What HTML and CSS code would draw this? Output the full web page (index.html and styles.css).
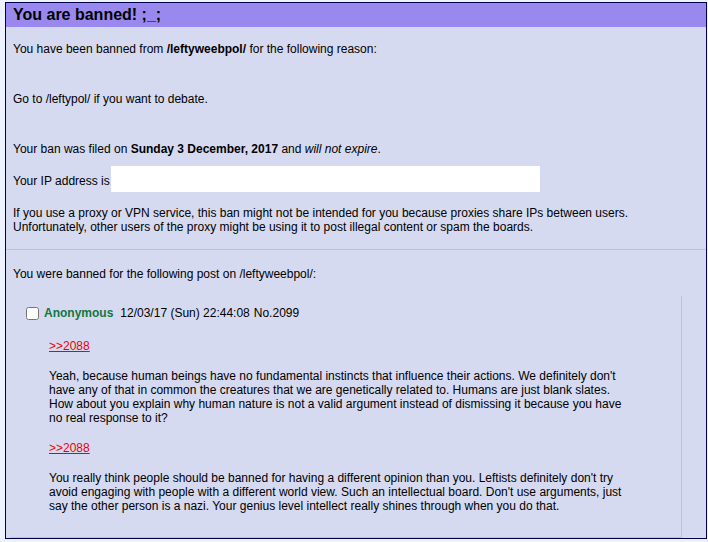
FILE: index.html
```html
<!DOCTYPE html>
<html>
<head>
  <title>Banned</title>
  <meta name="viewport" content="width=device-width, initial-scale=1.0">
  <link rel="stylesheet" href="styles.css">
</head>
<body>

  <div class="ban">
    <h2>You are banned! ;_;</h2>
    <p>You have been banned from <strong>/leftyweebpol/</strong> for the following reason:</p>
    <p class="reason">Go to /leftypol/ if you want to debate.</p>
    <p>Your ban was filed on <strong>Sunday 3 December, 2017</strong> and <em>will not expire</em>.</p>
    <p>Your IP address is <span class="ip"></span></p>
    <p>If you use a proxy or VPN service, this ban might not be intended for you because proxies share IPs between users. Unfortunately, other users of the proxy might be using it to post illegal content or spam the boards.</p>
    <hr>
    <p>You were banned for the following post on /leftyweebpol/:</p>

    <!-- the post -->
    <div class="post reply">
      <div class="intro">
        <input type="checkbox" class="delete">
        <span class="name">Anonymous</span>
        <span class="time">12/03/17 (Sun) 22:44:08</span> <span class="num">No.2099</span>
      </div>
      <div class="body">
        <p><a href="#" class="quote-link">&gt;&gt;2088</a></p>
        <p>Yeah, because human beings have no fundamental instincts that influence their actions. We definitely don't have any of that in common the creatures that we are genetically related to. Humans are just blank slates. How about you explain why human nature is not a valid argument instead of dismissing it because you have no real response to it?</p>
        <p><a href="#" class="quote-link">&gt;&gt;2088</a></p>
        <p>You really think people should be banned for having a different opinion than you. Leftists definitely don't try avoid engaging with people with a different world view. Such an intellectual board. Don't use arguments, just say the other person is a nazi. Your genius level intellect really shines through when you do that.</p>
      </div>
    </div>
  </div>

</body>
</html>
```

FILE: styles.css
```css
html {
  background: #eef2ff;
}

body {
  margin: 2px 1px 0 5px;
  font-family: "Liberation Sans", Arial, sans-serif;
  font-size: 12px;
  color: #000;
}

.ban {
  background: #d6daf0;
  border: 1px solid #000050;
}

.ban h2 {
  margin: 0;
  padding: 3px 7px;
  background: #9988ee;
  font-size: 16px;
  line-height: 18px;
}

.ban p {
  margin: 12px 0;
  padding: 3px 7px;
}

.ban p.reason {
  margin: 30px 0;
}

.ip {
  display: inline-block;
  width: 429px;
  height: 26px;
  margin: -8px 0 -7px -2px;
  background: #fff;
}

hr {
  border: none;
  border-top: 1px solid #b7c5d9;
  margin: 6px 0 14px;
}

.post.reply {
  margin: 0 24px 0 4px;
  padding: 10px 0 0;
  border-right: 1px solid #b7c5d9;
  border-bottom: 1px solid #b7c5d9;
}

.intro {
  display: flex;
  align-items: center;
  height: 14px;
}

.delete {
  width: 13px;
  height: 13px;
  margin: 0 5px 0 16px;
}

.name {
  color: #117743;
  font-weight: bold;
  margin-right: 7px;
}

.num {
  margin-left: 4px;
}

.post .body {
  margin: 19px 52px 0 39px;
  padding-bottom: 24px;
}

.post .body p {
  margin: 16px 0 0;
  padding: 0;
}

.post .body p:first-child {
  margin-top: 0;
}

.quote-link {
  color: #ee0000;
}
```
